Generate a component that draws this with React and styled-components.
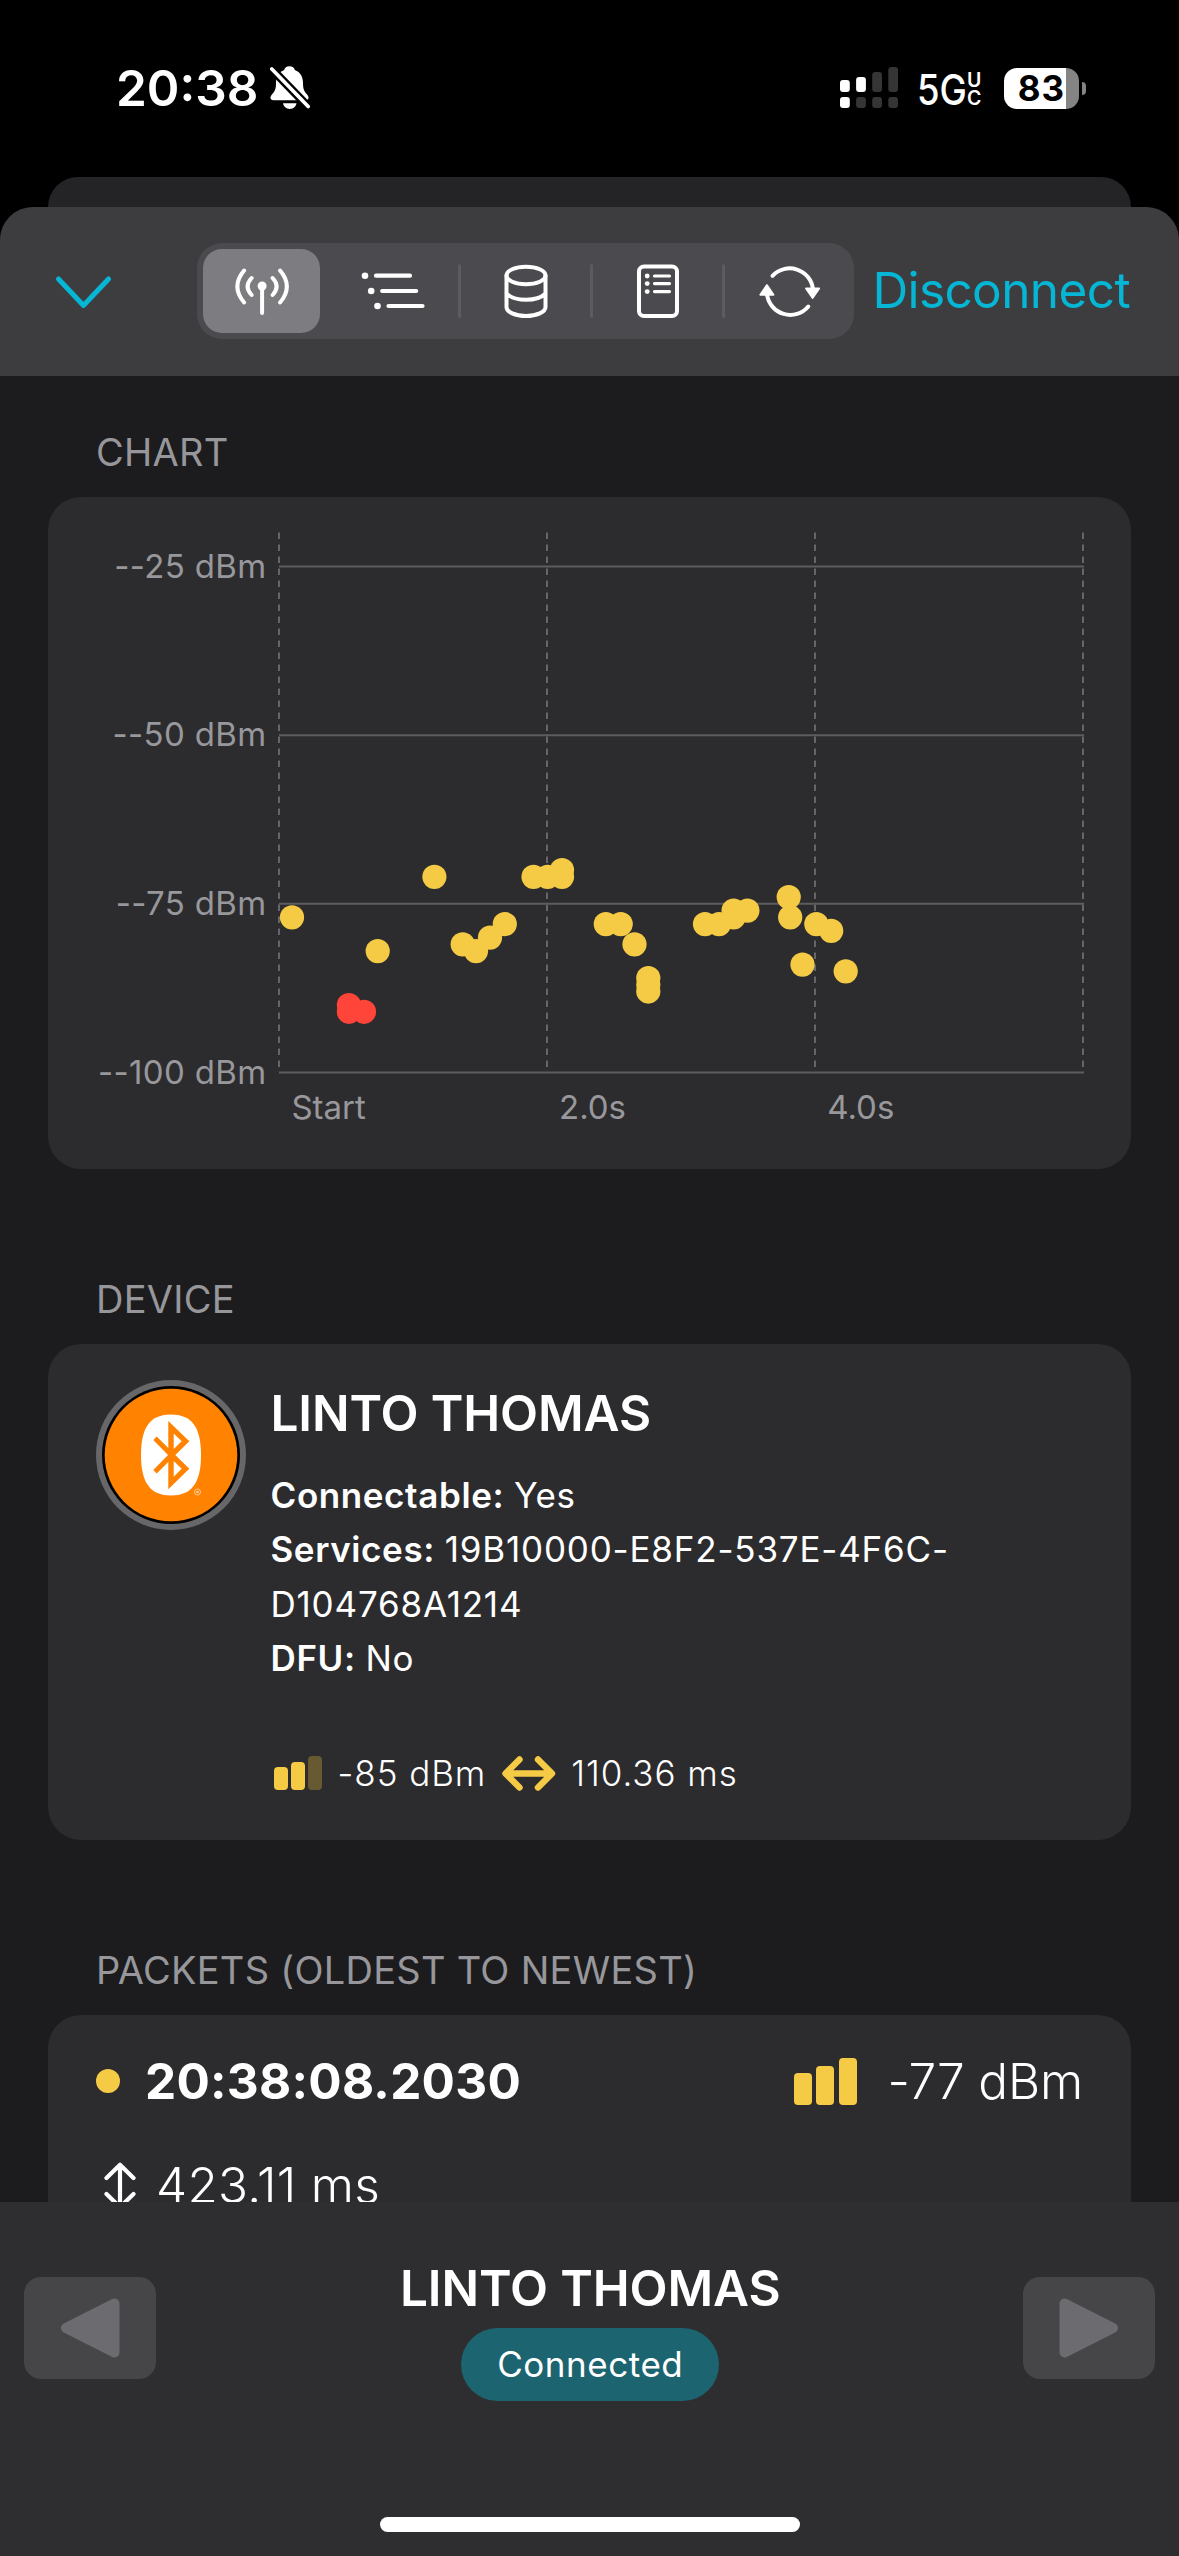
import React from 'react';
import styled, { createGlobalStyle } from 'styled-components';

const GlobalStyle = createGlobalStyle`
  * { box-sizing: border-box; }
  body {
    margin: 0;
    background: #000;
    color: #fff;
    font-family: Inter, "Liberation Sans", sans-serif;
    -webkit-font-smoothing: antialiased;
  }
  svg { display: block; flex: none; }
`;

const Screen = styled.div`
  width: 1179px;
  height: 2556px;
  display: flex;
  flex-direction: column;
  overflow: hidden;
  background: #000;
`;

/* Status bar */
const StatusBar = styled.header`
  height: 177px;
  padding: 58px 93px 0 116px;
  display: flex;
  align-items: flex-start;
  justify-content: space-between;
`;
const StatusGroup = styled.div`
  height: 60px;
  display: flex;
  align-items: center;
  gap: ${(p) => p.$gap || 0}px;
`;
const Clock = styled.span`
  font-size: 49.5px;
  font-weight: 600;
  line-height: 60px;
`;
const Network = styled.span`
  width: 50px;
  margin-left: 19px;
  font-size: 42px;
  font-weight: 500;
  line-height: 60px;
  white-space: nowrap;
  padding-top: 3px;
  transform: scaleX(0.87);
  transform-origin: left;
`;
const NetworkSub = styled.span`
  width: 37px;
  display: flex;
  flex-direction: column;
  font-size: 19.5px;
  font-weight: 600;
  line-height: 17.5px;
  padding-top: 3px;
`;
const Battery = styled.span`
  width: 75px;
  height: 41px;
  border-radius: 13px;
  background: linear-gradient(to right, #fff 62px, #848484 62px);
  color: #000;
  font-size: 35px;
  font-weight: 700;
  line-height: 41px;
  letter-spacing: 1px;
  text-align: center;
`;
const BatteryCap = styled.span`
  width: 4px;
  height: 13px;
  margin-left: 3px;
  border-radius: 0 6px 6px 0;
  background: #848484;
`;

/* Sheets */
const BackSheet = styled.div`
  height: 30px;
  margin: 0 48px;
  border-radius: 30px 30px 0 0;
  background: #242426;
  flex: none;
`;
const Sheet = styled.main`
  flex: 1;
  min-height: 0;
  display: flex;
  flex-direction: column;
  border-radius: 33px 33px 0 0;
  overflow: hidden;
  background: #1c1c1e;
`;
const Toolbar = styled.nav`
  height: 169px;
  flex: none;
  padding: 0 0 1px 55px;
  display: flex;
  align-items: center;
  background: #3d3d40;
`;
const IconButton = styled.button`
  all: unset;
  width: 57px;
  margin: 3px 85px 0 0;
`;
const Segments = styled.div`
  width: 657px;
  height: 96px;
  border-radius: 25px;
  background: #4b4a4f;
  display: grid;
  grid-template-columns: repeat(5, 132px);
  justify-content: center;
  align-items: center;
`;
const Segment = styled.div`
  position: relative;
  height: 84px;
  margin: 0 7.5px;
  border-radius: 19px;
  display: flex;
  align-items: center;
  justify-content: center;
  background: ${(p) => (p.$active ? '#7c7c81' : 'transparent')};
  ${(p) =>
    p.$divided &&
    `&::before {
      content: "";
      position: absolute;
      left: -9px;
      top: 15px;
      width: 3px;
      height: 54px;
      border-radius: 2px;
      background: #5b5b60;
    }`}
`;
const TextButton = styled.button`
  all: unset;
  margin: 0 0 2px 18.4px;
  color: #05b6d5;
  font-size: 49.5px;
  line-height: 66px;
  letter-spacing: -0.6px;
`;

/* Scroll content */
const Content = styled.div`
  flex: 1;
  min-height: 0;
  overflow: hidden;
  padding: 53px 48px 0;
`;
const SectionTitle = styled.h2`
  margin: 0 0 22px 48px;
  height: 46px;
  color: #97979b;
  font-size: 38px;
  font-weight: 400;
  line-height: 46px;
  letter-spacing: 0.27px;
`;
const Card = styled.section`
  height: ${(p) => p.$height}px;
  margin-bottom: 107px;
  border-radius: 33px;
  background: #2c2c2e;
`;
const AxisText = styled.text`
  fill: #98989c;
  font-size: 33px;
  letter-spacing: ${(p) => p.$spacing || 0}px;
`;

const DeviceCard = styled(Card)`
  display: flex;
  gap: 24.500px;
  padding: 36px 48px;
`;
const DeviceInfo = styled.div`
  flex: 1;
`;
const DeviceName = styled.h3`
  margin: 0;
  font-size: 49.5px;
  font-weight: 600;
  line-height: 66px;
  letter-spacing: -0.12px;
`;
const Details = styled.dl`
  margin: 22px 0 61px;
  font-size: 35px;
  line-height: 54.4px;
`;
const Detail = styled.div`
  dt { display: inline; font-weight: 600; letter-spacing: 0.6px; }
  dd { display: inline; margin: 0; letter-spacing: ${(p) => p.$spacing}px; }
`;
const Stats = styled.div`
  height: 53px;
  padding-left: 3.5px;
  display: flex;
  align-items: center;
  gap: 15.5px;
  font-size: 35px;
  font-weight: 300;
  letter-spacing: 0.95px;
`;

const PacketCard = styled(Card)`
  padding: 33px 48px;
`;
const PacketRow = styled.div`
  height: 66px;
  margin-bottom: 38px;
  padding-left: ${(p) => p.$indent || 0}px;
  display: flex;
  align-items: center;
  gap: ${(p) => p.$gap}px;
  font-size: 49.5px;
  line-height: 66px;
`;
const Dot = styled.span`
  width: 24px;
  height: 24px;
  border-radius: 50%;
  background: #f5cb45;
`;
const PacketTime = styled.strong`
  flex: 1;
  font-weight: 700;
  letter-spacing: 0.25px;
`;
const PacketValue = styled.span`
  font-weight: 300;
  letter-spacing: ${(p) => p.$spacing}px;
`;
const Bars = styled.span`
  display: flex;
  align-items: flex-end;
  gap: ${(p) => p.$gap}px;
  margin-right: ${(p) => p.$after || 0}px;
`;
const Bar = styled.i`
  width: ${(p) => p.$w}px;
  height: ${(p) => p.$h}px;
  border-radius: 4px;
  background: ${(p) => (p.$dim ? '#675a33' : '#f5cb45')};
`;

/* Footer */
const Footer = styled.footer`
  height: 354px;
  flex: none;
  display: flex;
  flex-direction: column;
  align-items: center;
  justify-content: space-between;
  padding-bottom: 24px;
  background: #2e2e30;
`;
const Pager = styled.div`
  width: 100%;
  padding: 53px 24px 0;
  display: flex;
  justify-content: space-between;
  align-items: flex-start;
`;
const PagerButton = styled.button`
  all: unset;
  width: 132px;
  height: 102px;
  margin-top: 22px;
  border-radius: 17px;
  background: #464649;
  display: flex;
  align-items: center;
  justify-content: center;
`;
const Current = styled.div`
  display: flex;
  flex-direction: column;
  align-items: center;
  gap: 7px;
  padding-left: 1.5px;
`;
const Badge = styled.span`
  width: 258px;
  height: 73px;
  border-radius: 37px;
  background: #1c6570;
  font-size: 35px;
  line-height: 73px;
  letter-spacing: 0.55px;
  text-align: center;
`;
const HomeIndicator = styled.div`
  width: 420px;
  height: 15px;
  border-radius: 8px;
  background: #fff;
`;

const BellSlash = () => (
  <svg width="41" height="44" viewBox="0 0 41 44" fill="#fff">
    <path d="M19.5.3C16.5.3 14.6 2 14.2 4 8.5 6 6 11 6 17c0 7-1.500 8.500-4.500 12C-.5 32 .5 34.300 3.500 34.300h32c3 0 4-2.300 2-5.300C34.500 25.500 33 24 33 17c0-6-2.500-11-8.200-13-.4-2-2.300-3.700-5.300-3.700z" />
    <path d="M13 37.300h13.500c-.6 3.300-3.200 5.700-6.700 5.700s-6.200-2.400-6.800-5.700z" />
    <path d="M-1 .2L41 43.500" stroke="#000" strokeWidth="8.500" />
    <path d="M1.800 3L38.200 40.500" stroke="#fff" strokeWidth="3.700" strokeLinecap="round" />
  </svg>
);

const CellSignal = () => (
  <svg width="58" height="42" viewBox="0 0 58 42">
    {[12, 15, 20, 25].map((h, i) => (
      <rect key={h} x={i * 16.1} y={25 - h} width="9.800" height={h} rx="3" fill={i < 2 ? '#fff' : '#353535'} />
    ))}
    {[0, 1, 2, 3].map((i) => (
      <rect key={i} x={i * 16.1} y="30" width="9.800" height="11" rx="3" fill={i < 1 ? '#fff' : '#353535'} />
    ))}
  </svg>
);

const line = { fill: 'none', stroke: '#fff', strokeWidth: 4, strokeLinecap: 'round', strokeLinejoin: 'round' };

const AntennaIcon = () => (
  <svg width="58" height="54" viewBox="232.400 264 58 54" {...line}>
    <path d="M243.500 270.500q-13.500 16 0 32M251 278q-8 8.500 0 17M279.500 270.500q13.500 16 0 32M272 278q8 8.500 0 17M261.500 288v25" />
    <circle cx="261.500" cy="286" r="4.500" fill="#fff" stroke="none" />
  </svg>
);
const ListIcon = () => (
  <svg width="66" height="54" viewBox="361 264 66 54" {...line} strokeWidth="4.200">
    <path d="M376 275.700h34M382.200 291h34M388.500 306h34" />
    <g fill="#fff" stroke="none">
      <circle cx="365" cy="275.700" r="3.300" />
      <circle cx="371.200" cy="291" r="3.300" />
      <circle cx="377.500" cy="306" r="3.300" />
    </g>
  </svg>
);
const DatabaseIcon = () => (
  <svg width="44" height="54" viewBox="503.500 264.500 44 54" {...line}>
    <ellipse cx="525.500" cy="276" rx="19.500" ry="8.800" />
    <path d="M506 276v31.500c0 5 8.700 9 19.500 9s19.500-4 19.500-9V276M506 294c4 4 11.500 6.300 19.500 6.300S541 298 545 294" />
  </svg>
);
const DocumentIcon = () => (
  <svg width="44" height="54" viewBox="636 264 44 54" {...line}>
    <rect x="639" y="266.500" width="38" height="49.500" rx="5" />
    <path d="M654.500 276h15M654.500 283.600h15M654.500 291.600h15" strokeWidth="3.200" />
    <g fill="#fff" stroke="none">
      <circle cx="647.200" cy="276" r="2.400" />
      <circle cx="647.200" cy="283.600" r="2.400" />
      <circle cx="647.200" cy="291.600" r="2.400" />
    </g>
  </svg>
);
const RefreshIcon = () => (
  <svg width="62" height="54" viewBox="759 264.200 62 54" {...line}>
    <path d="M772.500 276A23.500 23.500 0 0 1 813 289.500M767 294.500A23.500 23.500 0 0 0 808.300 306.700" />
    <path d="M806 288.700h13.200l-6.600 9.500zM760.300 295h13.200l-6.600-9.700z" fill="#fff" strokeWidth="1.800" />
  </svg>
);
const segmentIcons = [AntennaIcon, ListIcon, DatabaseIcon, DocumentIcon, RefreshIcon];

const BluetoothAvatar = () => (
  <svg width="150" height="150" viewBox="96 1380 150 150">
    <circle cx="171" cy="1455" r="75" fill="#67676a" />
    <circle cx="171" cy="1455" r="69" fill="#000" />
    <circle cx="171" cy="1455" r="66.300" fill="#ff8200" />
    <path fill="#fff" d="M171 1414.500c21 0 30 13 30 40.500s-9 40.500-30 40.500-30-13-30-40.500 9-40.500 30-40.500z" />
    <path
      fill="#ff8200"
      fillRule="evenodd"
      d="M168.300 1421L189.300 1441.200L175.300 1455L189.300 1468.800L168.300 1489.300V1462L156.700 1473.500L153.300 1470L168 1455L153.300 1440L156.700 1436.500L168.300 1448ZM173.700 1433.500V1449L181.700 1441.200ZM173.700 1461V1476.700L181.700 1468.800Z"
    />
    <circle cx="197.500" cy="1492" r="3" fill="none" stroke="#ffd2a0" strokeWidth=".9" />
    <circle cx="197.500" cy="1492" r="1.300" fill="#ffd2a0" />
  </svg>
);

const yFor = (dbm) => 566.5 + (dbm - 25) * 6.747;
const weak = [[348.9, 90], [348.9, 91], [364, 91]];
const strong = [
  [292, 77], [377.7, 82], [434.4, 71], [462.7, 81], [476, 82], [490, 80], [504.8, 78],
  [533.5, 71], [547.6, 71], [562, 71], [562, 70], [605.8, 78], [620.7, 78], [634.5, 81],
  [648.3, 86], [648.3, 87], [648.3, 88], [705, 78], [719, 78], [733.6, 76], [733.6, 77],
  [747.4, 76], [788.7, 74], [790.2, 77], [802.5, 84], [816.3, 78], [831.2, 79], [845.7, 85],
];

const SignalChart = () => (
  <svg width="1083" height="672" viewBox="48 497 1083 672">
    {[279, 547, 815, 1083].map((x) => (
      <line key={x} x1={x} x2={x} y1="532.500" y2="1072" stroke="#66666a" strokeWidth="2" strokeDasharray="6.500 5.500" />
    ))}
    {[25, 50, 75, 100].map((v) => (
      <g key={v}>
        <line x1="279" x2="1084" y1={yFor(v)} y2={yFor(v)} stroke="#5d5d60" strokeWidth="2" />
        <AxisText x="266.500" y={yFor(v) + 11.3} textAnchor="end" $spacing={0.35}>{`--${v} dBm`}</AxisText>
      </g>
    ))}
    <AxisText x="291.400" y="1119.300">Start</AxisText>
    <AxisText x="559" y="1119.300">2.0s</AxisText>
    <AxisText x="827.200" y="1119.300">4.0s</AxisText>
    <g fill="#ff453a">
      {weak.map(([x, v], i) => <circle key={i} cx={x} cy={yFor(v)} r="12.100" />)}
    </g>
    <g fill="#f5cb45">
      {strong.map(([x, v], i) => <circle key={i} cx={x} cy={yFor(v)} r="12.100" />)}
    </g>
  </svg>
);

const HorizontalArrow = () => (
  <svg width="54" height="35" viewBox="0 0 54 35" fill="none" stroke="#f5cb45" strokeWidth="6.400" strokeLinecap="round" strokeLinejoin="round">
    <path d="M5 17.500h44M17.500 3.500L3.500 17.500l14 14M36 3.500l14 14-14 14" />
  </svg>
);
const VerticalArrow = () => (
  <svg width="32" height="47" viewBox="0 0 32 47" {...line} strokeWidth="4.200">
    <path d="M16 4v39M2.500 16L16 2.800 29.500 16M2.500 32L16 45.200 29.500 32" />
  </svg>
);
const Triangle = ({ flip }) => (
  <svg width="60" height="62" viewBox="0 0 60 62" transform={flip ? 'scale(-1 1)' : undefined}>
    <path d="M5.500 6.500v49L54 31z" fill="#6c6c70" stroke="#6c6c70" strokeWidth="10" strokeLinejoin="round" />
  </svg>
);

const details = [
  ['Connectable:', 'Yes', 0.5],
  ['Services:', '19B10000-E8F2-537E-4F6C-D104768A1214', 0.8],
  ['DFU:', 'No', 0.5],
];

export default function App() {
  return (
    <>
      <GlobalStyle />
      <Screen>
        <StatusBar>
          <StatusGroup $gap={12}>
            <Clock>20:38</Clock>
            <BellSlash />
          </StatusGroup>
          <StatusGroup>
            <CellSignal />
            <Network>5G</Network>
            <NetworkSub><span>U</span><span>C</span></NetworkSub>
            <Battery>83</Battery>
            <BatteryCap />
          </StatusGroup>
        </StatusBar>
        <BackSheet />
        <Sheet>
          <Toolbar>
            <IconButton aria-label="Close">
              <svg width="57" height="36" viewBox="0 0 57 36" fill="none" stroke="#05b6d5" strokeWidth="5" strokeLinecap="round" strokeLinejoin="round">
                <path d="M3.500 4l25 26.500 25-26.500" />
              </svg>
            </IconButton>
            <Segments>
              {segmentIcons.map((Icon, i) => (
                <Segment key={i} $active={i === 0} $divided={i > 1}><Icon /></Segment>
              ))}
            </Segments>
            <TextButton>Disconnect</TextButton>
          </Toolbar>
          <Content>
            <SectionTitle>CHART</SectionTitle>
            <Card $height={672}><SignalChart /></Card>

            <SectionTitle>DEVICE</SectionTitle>
            <DeviceCard $height={496}>
              <BluetoothAvatar />
              <DeviceInfo>
                <DeviceName>LINTO THOMAS</DeviceName>
                <Details>
                  {details.map(([label, value, spacing]) => (
                    <Detail key={label} $spacing={spacing}><dt>{label}</dt> <dd>{value}</dd></Detail>
                  ))}
                </Details>
                <Stats>
                  <Bars $gap={3}>
                    <Bar $w={14} $h={23} />
                    <Bar $w={14} $h={28} />
                    <Bar $w={14} $h={34} $dim />
                  </Bars>
                  <span>-85 dBm</span>
                  <HorizontalArrow />
                  <span>110.36 ms</span>
                </Stats>
              </DeviceInfo>
            </DeviceCard>

            <SectionTitle>PACKETS (OLDEST TO NEWEST)</SectionTitle>
            <PacketCard $height={300}>
              <PacketRow $gap={25}>
                <Dot />
                <PacketTime>20:38:08.2030</PacketTime>
                <Bars $gap={4.5} $after={5.5}>
                  <Bar $w={18} $h={32} />
                  <Bar $w={18} $h={39} />
                  <Bar $w={18} $h={47} />
                </Bars>
                <PacketValue $spacing={-0.17}>-77 dBm</PacketValue>
              </PacketRow>
              <PacketRow $gap={20} $indent={8}>
                <VerticalArrow />
                <PacketValue $spacing={0.25}>423.11 ms</PacketValue>
              </PacketRow>
            </PacketCard>
          </Content>
          <Footer>
            <Pager>
              <PagerButton aria-label="Previous"><Triangle flip /></PagerButton>
              <Current>
                <DeviceName>LINTO THOMAS</DeviceName>
                <Badge>Connected</Badge>
              </Current>
              <PagerButton aria-label="Next"><Triangle /></PagerButton>
            </Pager>
            <HomeIndicator />
          </Footer>
        </Sheet>
      </Screen>
    </>
  );
}
